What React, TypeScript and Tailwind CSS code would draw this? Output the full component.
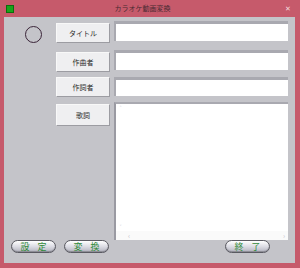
import React from "react";

const jp = { fontFamily: '"Noto Sans CJK JP", "Noto Sans", sans-serif' };

const Label: React.FC<{ text: string; className?: string }> = ({ text, className }) => (
  <div
    className={`w-[54px] h-[20px] flex items-center justify-center bg-[#efeff1] border border-t-[#f8f8f8] border-l-[#f8f8f8] border-b-[#9c9ca2] border-r-[#9c9ca2] text-[7px] text-[#2a2a2a] ${className ?? ""}`}
  >
    {text}
  </div>
);

const Field: React.FC<{ className?: string }> = ({ className }) => (
  <div
    className={`ml-[4px] w-[174px] bg-white border-t-[3px] border-l-[2px] border-t-[#a9a9b0] border-l-[#a9a9b0] ${className ?? ""}`}
  />
);

const PillButton: React.FC<{ a: string; b: string }> = ({ a, b }) => (
  <div className="w-[45px] h-[13px] rounded-full border-[1.5px] border-[#5a5a62] bg-gradient-to-b from-[#ffffff] via-[#dcdce4] to-[#b4b4c0] flex items-center justify-center gap-[8px] text-[9px] leading-none text-[#2f8a38] shadow-[inset_0_-1px_1px_rgba(0,0,0,0.25)]">
    <span>{a}</span>
    <span>{b}</span>
  </div>
);

export default function App() {
  return (
    <div className="w-[300px] h-[268px] bg-[#c65a6b] flex flex-col" style={jp}>
      {/* title bar */}
      <div className="h-[17px] flex items-center">
        <div className="ml-[6px] w-[8px] h-[8px] bg-[#1aa31a] border border-[#0c6e0c]" />
        <div className="flex-1 text-center text-[7px] text-[#4a2a32] pr-[14px]">カラオケ動画変換</div>
        <div className="mr-[9px] text-[7px] leading-none text-[#f3d6dc]">✕</div>
      </div>

      {/* client area */}
      <div className="ml-[4px] mr-[5px] h-[246px] bg-[#c4c4c9] flex flex-col">
        <div className="flex-1 flex pt-[4px]">
          {/* circle column */}
          <div className="w-[52px]">
            <div className="ml-[21px] mt-[5px] w-[17px] h-[17px] rounded-full border-[1.5px] border-[#3a2438]" />
          </div>

          <div className="flex flex-col">
            <div className="flex items-start h-[29px]">
              <Label text="タイトル" className="mt-[2px]" />
              <Field className="h-[20px]" />
            </div>
            <div className="flex items-start h-[27px]">
              <Label text="作曲者" className="mt-[2px]" />
              <Field className="h-[20px]" />
            </div>
            <div className="flex items-start h-[25px]">
              <Label text="作詞者" />
              <Field className="h-[19px]" />
            </div>
            <div className="flex items-start">
              <Label text="歌詞" className="mt-[2px] h-[22px]" />
              <div className="ml-[4px] w-[174px] h-[138px] bg-white border-t-[2px] border-l-[2px] border-t-[#a9a9b0] border-l-[#9a9aa2] flex flex-col">
                <div className="flex-1 flex">
                  <div className="w-[9px] flex flex-col items-center justify-between py-[1px] text-[6px] leading-none text-[#c4c4cc]">
                    <span>˄</span>
                    <span>˅</span>
                  </div>
                  <div className="flex-1" />
                </div>
                <div className="h-[9px] flex items-center justify-between pl-[12px] pr-[3px] text-[7px] leading-none text-[#c4c4cc] bg-[#fafafa]">
                  <span>‹</span>
                  <span>›</span>
                </div>
              </div>
            </div>
          </div>
        </div>

        {/* buttons */}
        <div className="h-[18px] flex items-start pl-[7px] pr-[25px] mb-[5px]">
          <PillButton a="設" b="定" />
          <div className="ml-[8px]">
            <PillButton a="変" b="換" />
          </div>
          <div className="ml-auto">
            <PillButton a="終" b="了" />
          </div>
        </div>
      </div>
    </div>
  );
}
